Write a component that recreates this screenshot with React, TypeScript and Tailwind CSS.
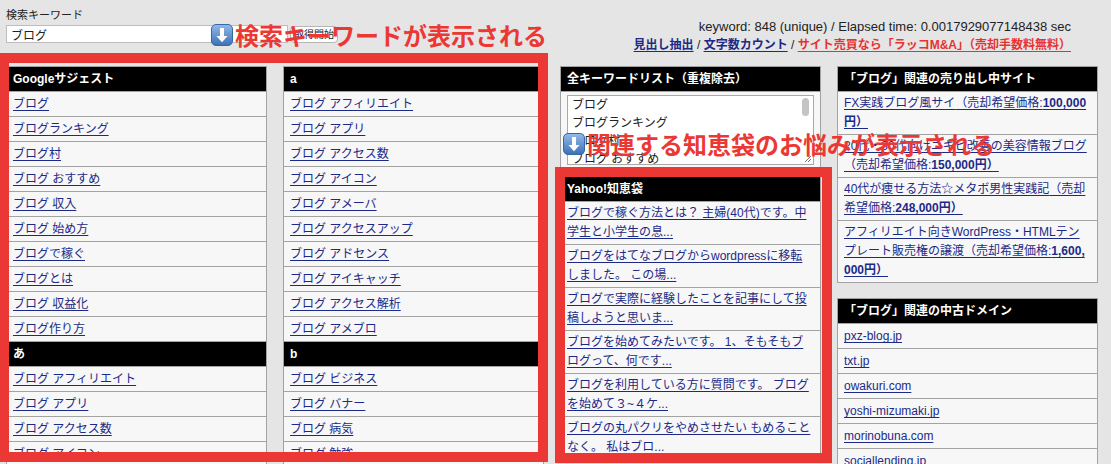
import type { ReactNode } from "react";

const linkCls = "text-[#1c2a87] underline underline-offset-[2px]";

type Row = { text: string; head?: boolean };

const googleRows: Row[] = [
  { text: "ブログ" },
  { text: "ブログランキング" },
  { text: "ブログ村" },
  { text: "ブログ おすすめ" },
  { text: "ブログ 収入" },
  { text: "ブログ 始め方" },
  { text: "ブログで稼ぐ" },
  { text: "ブログとは" },
  { text: "ブログ 収益化" },
  { text: "ブログ作り方" },
  { text: "あ", head: true },
  { text: "ブログ アフィリエイト" },
  { text: "ブログ アプリ" },
  { text: "ブログ アクセス数" },
  { text: "ブログ アイコン" },
];

const alphaRows: Row[] = [
  { text: "ブログ アフィリエイト" },
  { text: "ブログ アプリ" },
  { text: "ブログ アクセス数" },
  { text: "ブログ アイコン" },
  { text: "ブログ アメーバ" },
  { text: "ブログ アクセスアップ" },
  { text: "ブログ アドセンス" },
  { text: "ブログ アイキャッチ" },
  { text: "ブログ アクセス解析" },
  { text: "ブログ アメブロ" },
  { text: "b", head: true },
  { text: "ブログ ビジネス" },
  { text: "ブログ バナー" },
  { text: "ブログ 病気" },
  { text: "ブログ 勉強" },
];

const chiebukuro = [
  "ブログで稼ぐ方法とは？ 主婦(40代)です。中学生と小学生の息...",
  "ブログをはてなブログからwordpressに移転しました。 この場...",
  "ブログで実際に経験したことを記事にして投稿しようと思いま...",
  "ブログを始めてみたいです。 1、そもそもブログって、何です...",
  "ブログを利用している方に質問です。 ブログを始めて３~４ケ...",
  "ブログの丸パクリをやめさせたい もめることなく。 私はブロ...",
];

const sites = [
  { name: "FX実践ブログ風サイ", price: "100,000円）" },
  { name: "20代・30代向けニキビ改善の美容情報ブログ", price: "150,000円）" },
  { name: "40代が痩せる方法☆メタボ男性実践記", price: "248,000円）" },
  { name: "アフィリエイト向きWordPress・HTMLテンプレート販売権の譲渡", price: "1,600,000円）" },
];

const domains = ["pxz-blog.jp", "txt.jp", "owakuri.com", "yoshi-mizumaki.jp", "morinobuna.com", "sociallending.jp"];

function Box({ title, children, className = "" }: { title: string; children: ReactNode; className?: string }) {
  return (
    <div className={`border border-[#a3a3a3] bg-[#f7f7f7] ${className}`}>
      <div className="h-[24px] bg-black px-[6px] text-[12px] font-bold leading-[24px] text-white whitespace-nowrap">
        {title}
      </div>
      {children}
    </div>
  );
}

function ListRows({ rows }: { rows: Row[] }) {
  return (
    <>
      {rows.map((r, i) =>
        r.head ? (
          <div
            key={i}
            className="h-[25px] border-t border-[#a3a3a3] bg-black px-[6px] text-[12px] font-bold leading-[24px] text-white"
          >
            {r.text}
          </div>
        ) : (
          <div key={i} className="border-t border-[#a3a3a3] px-[6px] pt-[3px] pb-[2px] text-[12px] leading-[19px] whitespace-nowrap">
            <a href="#" className={linkCls}>
              {r.text}
            </a>
          </div>
        )
      )}
    </>
  );
}

function ArrowIcon({ id }: { id: string }) {
  return (
    <svg width="22" height="22" viewBox="0 0 22 22" className="shrink-0">
      <defs>
        <linearGradient id={id} x1="0" y1="0" x2="0" y2="1">
          <stop offset="0" stopColor="#94bbe9" />
          <stop offset="1" stopColor="#3c70b6" />
        </linearGradient>
      </defs>
      <rect x="0.5" y="0.5" width="21" height="21" rx="4.5" fill={`url(#${id})`} stroke="#3767a6" />
      <path d="M9 4h4v8h3.6L11 18.2 5.4 12H9z" fill="#fff" />
    </svg>
  );
}

export default function App() {
  return (
    <div className="relative h-[464px] w-full overflow-hidden bg-[#e5e5e5] font-['Liberation_Sans','Noto_Sans_CJK_JP',sans-serif] text-[#222]">
      {/* top bar */}
      <div className="flex h-[66px] justify-between">
        <div className="pl-[6px] pt-[8px]">
          <div className="text-[11px] leading-[14px]">検索キーワード</div>
          <div className="mt-[3px] flex items-center">
            <input
              readOnly
              defaultValue="ブログ"
              className="h-[18px] w-[282px] border border-[#bdbdbd] bg-white px-[4px] text-[12px] leading-[16px] outline-none"
            />
            <button className="ml-[2px] h-[17px] rounded-[4px] border border-[#b5b5b5] bg-white px-[3px] text-[10px] leading-[15px]">
              取得開始
            </button>
          </div>
        </div>
        <div className="pr-[40px] pt-[18px] text-right">
          <div className="text-[13px] leading-[18px]">keyword: 848 (unique) / Elapsed time: 0.0017929077148438 sec</div>
          <div className="text-[12px] leading-[18px]">
            <a href="#" className={`${linkCls} font-bold`}>見出し抽出</a>
            {" / "}
            <a href="#" className={`${linkCls} font-bold`}>文字数カウント</a>
            {" / "}
            <a href="#" className="font-bold text-[#e6332f] underline underline-offset-[2px]">
              サイト売買なら「ラッコM&A」（売却手数料無料）
            </a>
          </div>
        </div>
      </div>

      {/* columns */}
      <div className="grid grid-cols-[261px_261px_261px_261px] items-start gap-x-[16px] pl-[6px]">
        <Box title="Googleサジェスト">
          <ListRows rows={googleRows} />
        </Box>

        <Box title="a">
          <ListRows rows={alphaRows} />
        </Box>

        <div className="flex flex-col">
          <Box title="全キーワードリスト（重複除去）">
            <div className="border-t border-[#a3a3a3] px-[6px] pt-[3px] pb-[4px]">
              <div className="relative h-[70px] overflow-hidden border border-[#a9a9a9] bg-white pl-[4px] text-[12px] leading-[18px]">
                <div>ブログ</div>
                <div>ブログランキング</div>
                <div>ブログ村</div>
                <div>ブログ おすすめ</div>
                <div className="absolute right-[4px] top-[2px] h-[18px] w-[7px] rounded-full bg-[#c4c4c4]" />
                <svg width="8" height="8" viewBox="0 0 8 8" className="absolute bottom-[1px] right-[1px]">
                  <path d="M7 1L1 7M7 4L4 7" stroke="#777" strokeWidth="1" />
                </svg>
              </div>
            </div>
          </Box>

          <Box title="Yahoo!知恵袋" className="mt-[6px]">
            {chiebukuro.map((t, i) => (
              <div key={i} className="border-t border-[#a3a3a3] px-[6px] py-[2px] text-[12px] leading-[19px] break-all">
                <a href="#" className={linkCls}>
                  {t}
                </a>
              </div>
            ))}
          </Box>
        </div>

        <div className="flex flex-col gap-[15px]">
          <Box title="「ブログ」関連の売り出し中サイト">
            {sites.map((s, i) => (
              <div key={i} className="border-t border-[#a3a3a3] px-[6px] py-[2px] text-[12px] leading-[19px] break-all">
                <a href="#" className={linkCls}>
                  {s.name}（売却希望価格:<b>{s.price}</b>
                </a>
              </div>
            ))}
          </Box>

          <Box title="「ブログ」関連の中古ドメイン">
            {domains.map((d) => (
              <div key={d} className="border-t border-[#a3a3a3] px-[6px] pt-[3px] pb-[2px] text-[12px] leading-[19px]">
                <a href="#" className={linkCls}>
                  {d}
                </a>
              </div>
            ))}
          </Box>
        </div>
      </div>

      {/* annotation overlays */}
      <div className="pointer-events-none absolute left-[-1px] top-[53px] h-[409px] w-[549px] border-[10px] border-[#ec3834]" />
      <div className="pointer-events-none absolute left-[555px] top-[167px] h-[296px] w-[277px] border-[10px] border-[#ec3834]" />

      <div className="pointer-events-none absolute left-[211px] top-[22px] flex items-center gap-[2px]">
        <ArrowIcon id="arrowA" />
        <span className="font-['Noto_Sans_CJK_JP',sans-serif] text-[24px] font-bold leading-[26px] whitespace-nowrap text-[#ec3834]">
          検索キーワードが表示される
        </span>
      </div>
      <div className="pointer-events-none absolute left-[563px] top-[131px] flex items-center gap-[2px]">
        <ArrowIcon id="arrowB" />
        <span className="font-['Noto_Sans_CJK_JP',sans-serif] text-[24px] font-bold leading-[26px] whitespace-nowrap text-[#ec3834]">
          関連する知恵袋のお悩みが表示される
        </span>
      </div>
    </div>
  );
}
